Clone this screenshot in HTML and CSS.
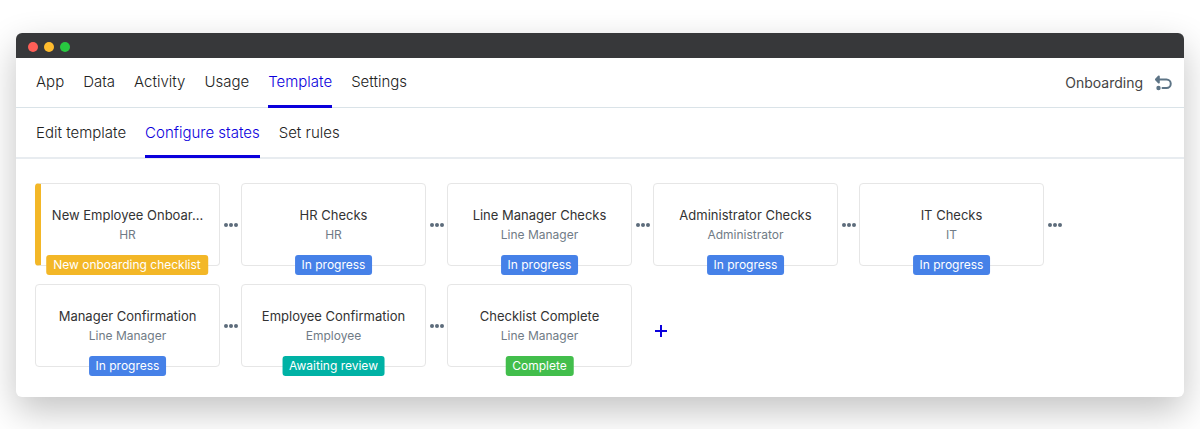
FILE: index.html
```
<!DOCTYPE html>
<html lang="en">
<head>
<meta charset="utf-8">
<meta name="viewport" content="width=device-width, initial-scale=1">
<title>Onboarding template</title>
<link rel="stylesheet" href="styles.css">
</head>
<body>
<main class="window">
  <div class="titlebar">
    <span class="light light-red"></span>
    <span class="light light-yellow"></span>
    <span class="light light-green"></span>
  </div>
  <header class="bar">
    <nav class="tabs" aria-label="Main">
      <a class="tab" href="#">App</a>
      <a class="tab" href="#">Data</a>
      <a class="tab" href="#">Activity</a>
      <a class="tab" href="#">Usage</a>
      <a class="tab tab-active" href="#">Template</a>
      <a class="tab" href="#">Settings</a>
    </nav>
    <div class="context">
      <span>Onboarding</span>
      <button class="icon-button" type="button" aria-label="Back">
        <svg class="back-icon" viewBox="0 0 18 16" width="18" height="16" fill="none" stroke="currentColor" stroke-width="2" stroke-linecap="round" stroke-linejoin="round">
          <path d="M2.500 4.500H12.500A4.250 4.250 0 0 1 12.500 13H8.500"/>
          <path d="M4.800 1.500L2 4.500L4.800 7.500Z" fill="currentColor"/>
          <circle cx="4.500" cy="13" r="1.200" fill="currentColor"/>
        </svg>
      </button>
    </div>
  </header>
  <nav class="bar tabs sub-bar" aria-label="Template">
    <a class="tab" href="#">Edit template</a>
    <a class="tab tab-active" href="#">Configure states</a>
    <a class="tab" href="#">Set rules</a>
  </nav>
  <section class="states" aria-label="States">
    <div class="state">
      <article class="card card-start"><h2 class="name">New Employee Onboar...</h2><p class="role">HR</p><span class="tag tag-yellow">New onboarding checklist</span></article>
      <button class="more" type="button" aria-label="More"><span class="dot"></span><span class="dot"></span><span class="dot"></span></button>
    </div>
    <div class="state">
      <article class="card"><h2 class="name">HR Checks</h2><p class="role">HR</p><span class="tag">In progress</span></article>
      <button class="more" type="button" aria-label="More"><span class="dot"></span><span class="dot"></span><span class="dot"></span></button>
    </div>
    <div class="state">
      <article class="card"><h2 class="name">Line Manager Checks</h2><p class="role">Line Manager</p><span class="tag">In progress</span></article>
      <button class="more" type="button" aria-label="More"><span class="dot"></span><span class="dot"></span><span class="dot"></span></button>
    </div>
    <div class="state">
      <article class="card"><h2 class="name">Administrator Checks</h2><p class="role">Administrator</p><span class="tag">In progress</span></article>
      <button class="more" type="button" aria-label="More"><span class="dot"></span><span class="dot"></span><span class="dot"></span></button>
    </div>
    <div class="state">
      <article class="card"><h2 class="name">IT Checks</h2><p class="role">IT</p><span class="tag">In progress</span></article>
      <button class="more" type="button" aria-label="More"><span class="dot"></span><span class="dot"></span><span class="dot"></span></button>
    </div>
    <div class="state">
      <article class="card"><h2 class="name">Manager Confirmation</h2><p class="role">Line Manager</p><span class="tag">In progress</span></article>
      <button class="more" type="button" aria-label="More"><span class="dot"></span><span class="dot"></span><span class="dot"></span></button>
    </div>
    <div class="state">
      <article class="card"><h2 class="name">Employee Confirmation</h2><p class="role">Employee</p><span class="tag tag-teal">Awaiting review</span></article>
      <button class="more" type="button" aria-label="More"><span class="dot"></span><span class="dot"></span><span class="dot"></span></button>
    </div>
    <div class="state">
      <article class="card"><h2 class="name">Checklist Complete</h2><p class="role">Line Manager</p><span class="tag tag-green">Complete</span></article>
    </div>
    <button class="add" type="button" aria-label="Add state">
      <svg viewBox="0 0 12 12" width="12" height="12" stroke="currentColor" stroke-width="2"><path d="M6 0V12M0 6H12"/></svg>
    </button>
  </section>
</main>
</body>
</html>
```
FILE: styles.css
```
* {
  box-sizing: border-box;
}

body {
  margin: 0;
  padding: 33px 16px;
  background: #fff;
  color: #333;
  font: 400 14px/20px Inter, "Liberation Sans", sans-serif;
}

button {
  padding: 0;
  border: 0;
  background: none;
  cursor: pointer;
}

.window {
  border-radius: 6px;
  background: #fff;
  box-shadow: 0 14px 36px rgba(0, 0, 0, 0.24);
}

.titlebar {
  display: flex;
  align-items: center;
  gap: 6px;
  height: 25px;
  padding: 2px 12px 0;
  border-radius: 6px 6px 0 0;
  background: #37383a;
}

.light {
  width: 10px;
  height: 10px;
  border-radius: 50%;
}

.light-red { background: #ff5f57; }
.light-yellow { background: #febc2e; }
.light-green { background: #28c840; }

.bar {
  display: flex;
  justify-content: space-between;
  height: 50px;
  padding: 0 12px 0 20px;
  border-bottom: 1px solid #dae3e8;
}

.bar.sub-bar {
  height: 51px;
  justify-content: flex-start;
  border-bottom: 2px solid #e8ecf0;
}

.tabs {
  display: flex;
  gap: 19px;
}

.tab {
  height: 50px;
  padding-top: 14px;
  border-bottom: 3px solid transparent;
  color: #222;
  font-size: 15px;
  font-weight: 300;
  text-decoration: none;
  white-space: nowrap;
}

.sub-bar .tab {
  padding-top: 15px;
}

.tab-active,
.sub-bar .tab-active {
  border-bottom-color: #0b00dc;
  color: #0b00dc;
}

.context {
  display: flex;
  align-items: center;
  gap: 11px;
  color: #444;
}

.icon-button {
  display: flex;
  color: #5d7486;
}

.states {
  display: flex;
  flex-wrap: wrap;
  row-gap: 18px;
  padding: 24px 19px 30px;
}

.state {
  display: flex;
  align-items: center;
  width: 206px;
}

.card {
  position: relative;
  width: 185px;
  height: 83px;
  padding: 21px 14px 0;
  border: 1px solid #e6e6e6;
  border-radius: 4px;
  text-align: center;
}

.card-start {
  padding-left: 9px;
  border-left: 6px solid #f3b727;
}

.name {
  margin: 0;
  color: #333;
  font-size: 13px;
  font-weight: 400;
  line-height: 20px;
  white-space: nowrap;
}

.role {
  margin: 0;
  color: #707b86;
  font-size: 12px;
  font-weight: 400;
}

.tag {
  position: absolute;
  bottom: -10px;
  left: 50%;
  padding: 0 7px;
  border-radius: 3px;
  background: #4681e8;
  color: #fff;
  font-size: 12px;
  white-space: nowrap;
  transform: translateX(-50%);
}

.card-start .tag {
  left: calc(50% - 3px);
}

.tag-yellow { background: #f3b727; }
.tag-teal { background: #00b2a5; }
.tag-green { background: #42be4c; }

.more {
  display: flex;
  gap: 1px;
  margin-left: 4px;
}

.dot {
  width: 4px;
  height: 4px;
  border-radius: 50%;
  background: #5d6c7b;
}

.add {
  display: flex;
  align-items: center;
  padding: 10px 0 0 2px;
  color: #0b00dc;
}
```
